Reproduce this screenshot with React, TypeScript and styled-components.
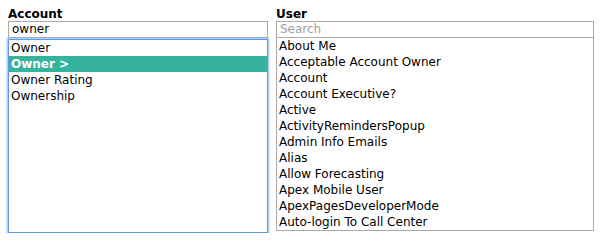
import React from 'react';
import styled, { createGlobalStyle } from 'styled-components';

const GlobalStyle = createGlobalStyle`
  html, body {
    margin: 0;
    padding: 0;
    background: #ffffff;
  }
  body {
    font-family: "DejaVu Sans", Verdana, sans-serif;
    font-size: 12px;
    color: #000000;
  }
`;

const Page = styled.div`
  display: flex;
  gap: 8px;
  padding: 8px 10px 0 8px;
`;

const Column = styled.div<{ $width: number }>`
  display: flex;
  flex-direction: column;
  width: ${(p) => p.$width}px;
`;

const Label = styled.div`
  font-weight: bold;
  font-size: 12px;
  line-height: 13px;
  height: 13px;
`;

const SearchInput = styled.div<{ $placeholder?: boolean }>`
  box-sizing: border-box;
  height: 17px;
  border: 1px solid #a9a9a9;
  padding: 0 3px;
  font-size: 12px;
  line-height: 15px;
  color: ${(p) => (p.$placeholder ? '#a0a0a0' : '#000000')};
`;

const ListBox = styled.div<{ $focused?: boolean; $height: number }>`
  box-sizing: border-box;
  height: ${(p) => p.$height}px;
  margin-top: ${(p) => (p.$focused ? '1px' : '0')};
  border: 1px solid ${(p) => (p.$focused ? '#5b9be6' : '#a9a9a9')};
  border-top: ${(p) => (p.$focused ? '1px solid #5b9be6' : 'none')};
  box-shadow: ${(p) =>
    p.$focused ? '0 0 2px 1px #8dbbf0, inset 0 0 1px 0 #b8d6f6' : 'none'};
  display: flex;
  flex-direction: column;
`;

const Option = styled.div<{ $selected?: boolean }>`
  height: 16px;
  line-height: 16px;
  padding: 0 2px;
  white-space: nowrap;
  font-weight: ${(p) => (p.$selected ? 'bold' : 'normal')};
  background: ${(p) => (p.$selected ? '#36b39f' : 'transparent')};
  color: ${(p) => (p.$selected ? '#ffffff' : '#000000')};
`;

const accountOptions = ['Owner', 'Owner >', 'Owner Rating', 'Ownership'];

const userOptions = [
  'About Me',
  'Acceptable Account Owner',
  'Account',
  'Account Executive?',
  'Active',
  'ActivityRemindersPopup',
  'Admin Info Emails',
  'Alias',
  'Allow Forecasting',
  'Apex Mobile User',
  'ApexPagesDeveloperMode',
  'Auto-login To Call Center',
];

const App = () => {
  return (
    <>
      <GlobalStyle />
      <Page>
        <Column $width={260}>
          <Label>Account</Label>
          <SearchInput>owner</SearchInput>
          <ListBox $focused $height={194}>
            {accountOptions.map((o, i) => (
              <Option key={o} $selected={i === 1}>
                {o}
              </Option>
            ))}
          </ListBox>
        </Column>
        <Column $width={318}>
          <Label>User</Label>
          <SearchInput $placeholder>Search</SearchInput>
          <ListBox $height={193}>
            {userOptions.map((o) => (
              <Option key={o}>{o}</Option>
            ))}
          </ListBox>
        </Column>
      </Page>
    </>
  );
};

export default App;
